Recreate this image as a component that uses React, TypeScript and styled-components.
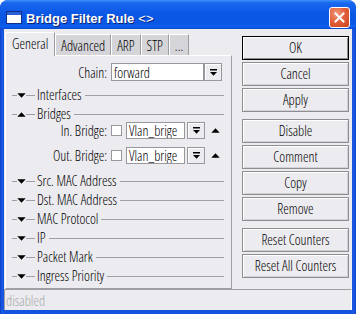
import React from 'react';
import styled, { createGlobalStyle } from 'styled-components';

const GlobalStyle = createGlobalStyle`
  html, body {
    margin: 0;
    padding: 0;
    background: #ffffff;
  }
`;

const Window = styled.div`
  width: 356px;
  height: 314px;
  box-sizing: border-box;
  display: flex;
  flex-direction: column;
  background: linear-gradient(to right, #0a3fc4 0px, #1c5ae6 2px, #1453df 4px, #1453df 352px, #1c5ae6 354px, #0a3fc4 356px);
  border-radius: 8px 8px 0 0;
  overflow: hidden;
  font-family: 'Open Sans', 'Liberation Sans', sans-serif;
  font-size: 14px;
  font-stretch: condensed;
  font-weight: 350;
  color: #000000;
`;

const TitleBar = styled.div`
  flex: none;
  height: 29px;
  box-sizing: border-box;
  padding: 6px 6px 0 6px;
  display: flex;
  align-items: center;
  gap: 4px;
  background: linear-gradient(
    to bottom,
    #3d8ff8 0%,
    #1a68f0 10%,
    #0b58e6 45%,
    #0a56e4 80%,
    #0d5fee 92%,
    #0747cf 100%
  );
`;

const Title = styled.div`
  margin-top: 2px;
  font-family: 'Liberation Sans', Arial, sans-serif;
  font-stretch: normal;
  font-size: 13px;
  font-weight: bold;
  color: #ffffff;
  text-shadow: 1px 1px 0 #0c2273;
  white-space: nowrap;

  span {
    font-weight: normal;
    margin-left: 4px;
  }
`;

const CloseButton = styled.div`
  margin-left: auto;
  width: 21px;
  height: 21px;
  box-sizing: border-box;
  border: 1px solid #ffffff;
  border-radius: 3px;
  background: radial-gradient(circle at 35% 30%, #f09a7c 0%, #e2623d 45%, #c8401b 100%);
  display: flex;
  align-items: center;
  justify-content: center;
`;

const Client = styled.div`
  flex: 1;
  min-height: 0;
  margin: 0 4px 4px;
  background: #ecebef;
  display: flex;
  flex-direction: column;
`;

const Body = styled.div`
  flex: 1;
  min-height: 0;
  display: flex;
  gap: 10px;
  padding: 3px 3px 0 1px;
`;

const LeftCol = styled.div`
  width: 227px;
  flex: none;
  display: flex;
  flex-direction: column;
`;

const TabStrip = styled.div`
  height: 23px;
  flex: none;
  display: flex;
  align-items: flex-end;
`;

const Tab = styled.div<{ $active?: boolean }>`
  box-sizing: border-box;
  height: ${p => (p.$active ? 24 : 21)}px;
  margin-bottom: ${p => (p.$active ? -1 : 0)}px;
  padding: 0 ${p => (p.$active ? 6 : 5)}px ${p => (p.$active ? 2 : 0)}px;
  display: flex;
  align-items: center;
  background: ${p => (p.$active ? '#ecebef' : '#d5d4d9')};
  border-top: 1px solid #ffffff;
  border-left: 1px solid #ffffff;
  border-right: 1px solid #9c9ca0;
  position: relative;
  z-index: ${p => (p.$active ? 1 : 0)};
  white-space: nowrap;
`;

const Panel = styled.div`
  flex: 1;
  box-sizing: border-box;
  border-top: 1px solid #ffffff;
  border-left: 1px solid #ffffff;
  border-right: 1px solid #a0a0a4;
  border-bottom: 1px solid #a0a0a4;
  padding-right: 7px;
  display: flex;
  flex-direction: column;
`;

const FieldRow = styled.div<{ $top: number; $h: number }>`
  display: flex;
  align-items: center;
  gap: 4px;
  height: ${p => p.$h}px;
  margin-top: ${p => p.$top}px;
  flex: none;
`;

const Label = styled.div`
  width: 101px;
  flex: none;
  text-align: right;
  white-space: nowrap;
`;

const Combo = styled.div<{ $gap: number }>`
  display: flex;
  gap: ${p => p.$gap}px;
  height: 100%;
`;

const TextBox = styled.div<{ $w: number }>`
  width: ${p => p.$w}px;
  height: 100%;
  box-sizing: border-box;
  background: #ffffff;
  border: 1px solid #98989c;
  padding-left: 2px;
  display: flex;
  align-items: center;
  white-space: nowrap;
  overflow: hidden;
`;

const DropButton = styled.div`
  width: 18px;
  height: 100%;
  box-sizing: border-box;
  border: 1px solid #98989c;
  box-shadow: inset 1px 1px 0 #ffffff;
  background: #ecebef;
  display: flex;
  align-items: center;
  justify-content: center;
`;

const CheckBox = styled.div`
  width: 11px;
  height: 11px;
  box-sizing: border-box;
  background: #ffffff;
  border: 1px solid #98989c;
  flex: none;
`;

const ArrowSlot = styled.div`
  margin-left: 2px;
  display: flex;
`;

const Section = styled.div<{ $top: number }>`
  display: flex;
  align-items: center;
  height: 16px;
  margin-top: ${p => p.$top}px;
  padding-left: 6px;
  flex: none;
`;

const Rule = styled.div<{ $w?: number }>`
  height: 1px;
  background: #a0a0a4;
  ${p => (p.$w ? `width: ${p.$w}px; flex: none;` : 'flex: 1;')}
`;

const SectionText = styled.span`
  margin: 0 3px 2px 2px;
  white-space: nowrap;
`;

const ButtonCol = styled.div`
  width: 107px;
  flex: none;
  display: flex;
  flex-direction: column;
  gap: 2px;
  padding-top: 4px;
`;

const Button = styled.button<{ $default?: boolean; $spaced?: boolean }>`
  height: 24px;
  margin: ${p => (p.$spaced ? 5 : 0)}px 0 0;
  padding: 0 0 1px;
  font: inherit;
  color: #000000;
  background: #ecebef;
  border: 1px solid ${p => (p.$default ? '#000000' : '#8e8e92')};
  box-shadow: inset 1px 1px 0 #ffffff, inset -1px -1px 0 ${p => (p.$default ? '#8e8e92' : '#d2d2d6')};
  white-space: nowrap;
`;

const StatusBar = styled.div`
  height: 21px;
  flex: none;
  box-sizing: border-box;
  border-top: 1px solid #a0a0a4;
  border-left: 1px solid #a0a0a4;
  border-right: 1px solid #ffffff;
  padding: 4px 0 0 1px;
  line-height: 14px;
  color: #a8a8ac;
`;

function WindowIcon() {
  return (
    <svg width="16" height="13" viewBox="0 0 16 13">
      <rect x="0.5" y="0.5" width="15" height="12" fill="#ffffff" stroke="#0f2f8a" />
      <rect x="1" y="1" width="14" height="3" fill="#2a5fd6" />
    </svg>
  );
}

function CloseIcon() {
  return (
    <svg width="11" height="11" viewBox="0 0 11 11">
      <path d="M1.5 1.5 L9.5 9.5 M9.5 1.5 L1.5 9.5" stroke="#ffffff" strokeWidth="2" strokeLinecap="square" />
    </svg>
  );
}

function DropIcon() {
  return (
    <svg width="7" height="7" viewBox="0 0 7 7">
      <rect x="0" y="0" width="7" height="1.5" fill="#000000" />
      <polygon points="0,3 7,3 3.5,6.8" fill="#000000" />
    </svg>
  );
}

function Triangle({ up }: { up?: boolean }) {
  return (
    <svg width="9" height="5" viewBox="0 0 9 5">
      <polygon points={up ? '4.5,0.3 8.7,4.7 0.3,4.7' : '0.3,0.3 8.7,0.3 4.5,4.7'} fill="#000000" />
    </svg>
  );
}

function SectionHeader({ title, top, open }: { title: string; top: number; open?: boolean }) {
  return (
    <Section $top={top}>
      <Rule $w={5} />
      <Triangle up={open} />
      <Rule $w={9} />
      <SectionText>{title}</SectionText>
      <Rule />
    </Section>
  );
}

function BridgeRow({ label, top }: { label: string; top: number }) {
  return (
    <FieldRow $top={top} $h={17}>
      <Label>{label}</Label>
      <CheckBox />
      <Combo $gap={2}>
        <TextBox $w={59}>Vlan_brige</TextBox>
        <DropButton>
          <DropIcon />
        </DropButton>
      </Combo>
      <ArrowSlot>
        <Triangle up />
      </ArrowSlot>
    </FieldRow>
  );
}

const tabs = ['General', 'Advanced', 'ARP', 'STP', '...'];

const collapsed = ['Src. MAC Address', 'Dst. MAC Address', 'MAC Protocol', 'IP', 'Packet Mark', 'Ingress Priority'];

export default function App() {
  return (
    <>
      <GlobalStyle />
      <Window>
        <TitleBar>
          <WindowIcon />
          <Title>
            Bridge Filter Rule<span>&lt;&gt;</span>
          </Title>
          <CloseButton>
            <CloseIcon />
          </CloseButton>
        </TitleBar>
        <Client>
          <Body>
            <LeftCol>
              <TabStrip>
                {tabs.map((t, i) => (
                  <Tab key={t} $active={i === 0}>
                    {t}
                  </Tab>
                ))}
              </TabStrip>
              <Panel>
                <FieldRow $top={7} $h={18}>
                  <Label>Chain:</Label>
                  <Combo $gap={0}>
                    <TextBox $w={93}>forward</TextBox>
                    <DropButton>
                      <DropIcon />
                    </DropButton>
                  </Combo>
                </FieldRow>
                <SectionHeader title="Interfaces" top={6} />
                <SectionHeader title="Bridges" top={3} open />
                <BridgeRow label="In. Bridge:" top={0} />
                <BridgeRow label="Out. Bridge:" top={8} />
                {collapsed.map((s, i) => (
                  <SectionHeader key={s} title={s} top={i === 0 ? 9 : 3} />
                ))}
              </Panel>
            </LeftCol>
            <ButtonCol>
              <Button $default>OK</Button>
              <Button>Cancel</Button>
              <Button>Apply</Button>
              <Button $spaced>Disable</Button>
              <Button>Comment</Button>
              <Button>Copy</Button>
              <Button>Remove</Button>
              <Button $spaced>Reset Counters</Button>
              <Button>Reset All Counters</Button>
            </ButtonCol>
          </Body>
          <StatusBar>disabled</StatusBar>
        </Client>
      </Window>
    </>
  );
}
